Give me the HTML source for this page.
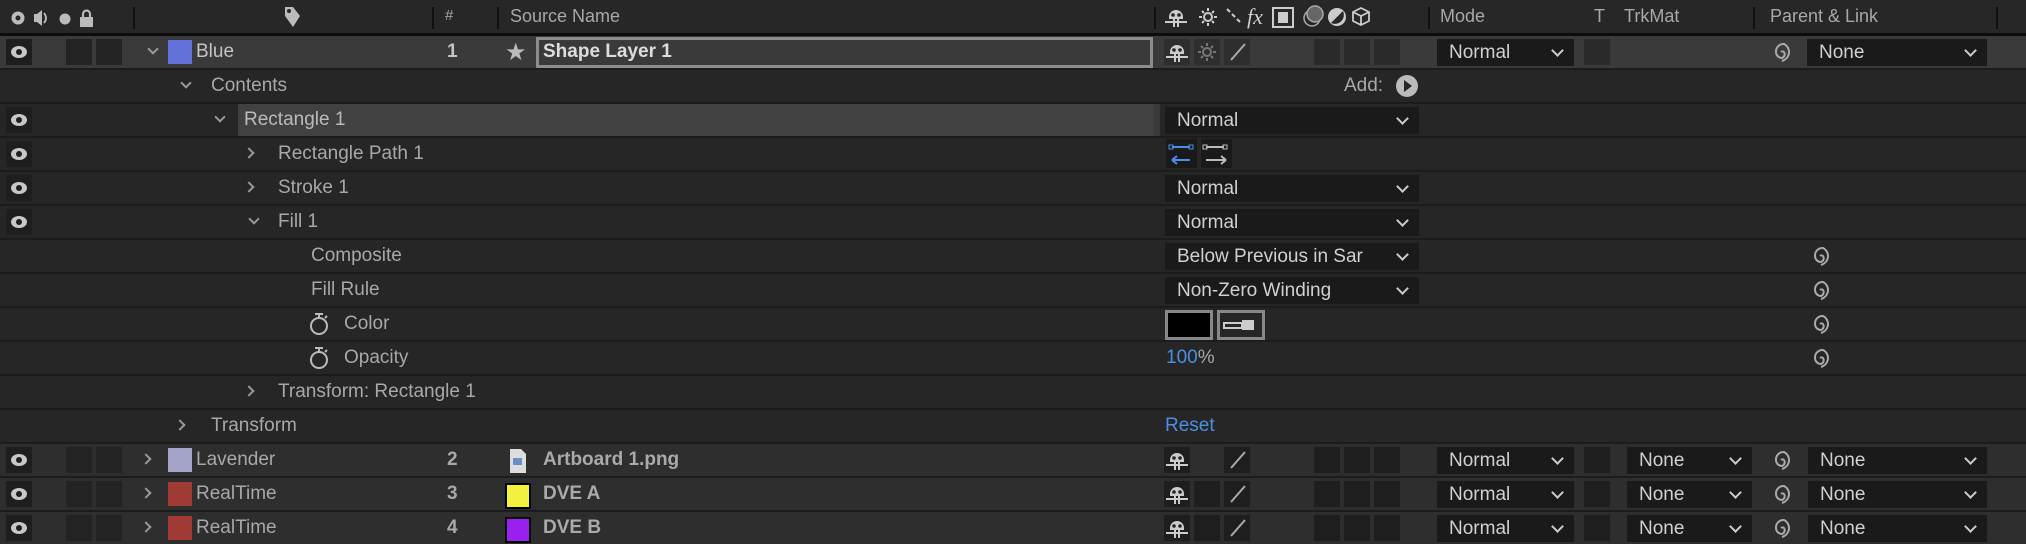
<!DOCTYPE html>
<html><head><meta charset="utf-8"><style>
*{margin:0;padding:0;box-sizing:border-box}
body{width:2026px;height:544px;background:#1c1c1c;overflow:hidden;font-family:"Liberation Sans",sans-serif;font-size:19px;color:#a8a8a8;position:relative}
.a{position:absolute}
.hdr{left:0;top:0;width:2026px;height:33px;background:#272727}
.row{position:absolute;left:0;width:2026px;height:32px;background:#262626}
.lay{background:#2e2e2e}
.sel{background:#3a3a3a}
.t{position:absolute;top:5px;white-space:nowrap}
.eye{position:absolute;left:6px;top:3px;width:26px;height:26px;background:#1e1e1e}
.eye::after{content:"";position:absolute;left:5px;top:7px;width:16px;height:12px;border-radius:50%;background:#c8c8c8}
.eye::before{content:"";position:absolute;left:10px;top:10px;width:6px;height:6px;border-radius:50%;background:#1e1e1e;z-index:2}
.bx{position:absolute;top:3px;width:26px;height:26px;background:#232323}
.dd{position:absolute;top:3px;height:27px;background:#1a1a1a;color:#d0d0d0}
.dd span{position:absolute;left:12px;top:3px}
.dd i{position:absolute;right:12px;top:7px;width:9px;height:9px;border-right:2px solid #ccc;border-bottom:2px solid #ccc;transform:rotate(45deg)}
.chd{position:absolute;top:9px;width:8px;height:8px;border-right:2px solid #999;border-bottom:2px solid #999;transform:rotate(45deg)}
.chr{position:absolute;top:11px;width:8px;height:8px;border-right:2px solid #999;border-bottom:2px solid #999;transform:rotate(-45deg)}
.sw{position:absolute;top:4px;width:24px;height:24px}
.sp{position:absolute;top:3px}
</style></head><body>
<svg width="0" height="0" style="position:absolute"><defs>
<symbol id="shy" viewBox="0 0 26 26"><path d="M6 13a7 7 0 0 1 14 0v2H6z" fill="#ccc"/><circle cx="10" cy="11" r="1.8" fill="#222"/><circle cx="16" cy="11" r="1.8" fill="#222"/><path d="M2 18h22" stroke="#ccc" stroke-width="2"/><path d="M11 15v8M15 15v8" stroke="#ccc" stroke-width="2"/></symbol>
<symbol id="spi" viewBox="0 0 26 26"><path d="M13 13a2 2 0 0 1 3 0 4 4 0 0 1-2 6 6 6 0 0 1-6-6 7.5 7.5 0 0 1 8-8 9 9 0 0 1 5 9 10 10 0 0 1-7 8" stroke="#aaa" stroke-width="2" fill="none"/></symbol>
</defs></svg>
<div class="a hdr">
 <svg class="a" style="left:10px;top:7px" width="90" height="22" viewBox="0 0 90 22"><circle cx="8" cy="11" r="6.5" fill="#bbb"/><circle cx="8" cy="11" r="2.5" fill="#272727"/><path d="M24 7h3l5-4v16l-5-4h-3z" fill="#bbb"/><path d="M34 6q4 5 0 10" stroke="#bbb" fill="none" stroke-width="1.8"/><circle cx="55" cy="12" r="5.5" fill="#bbb"/><rect x="70" y="10" width="13" height="10" fill="#bbb"/><path d="M73 10v-3a3.5 3.5 0 0 1 7 0v3" stroke="#bbb" stroke-width="2.2" fill="none"/></svg>
 <div class="a" style="left:133px;top:7px;width:2px;height:22px;background:#111"></div>
 <svg class="a" style="left:282px;top:5px" width="20" height="24"><path d="M3 2h8l7 9-7 11-8-11z" fill="#bbb"/><circle cx="7" cy="6" r="2" fill="#272727"/></svg>
 <div class="a" style="left:432px;top:7px;width:2px;height:22px;background:#111"></div>
 <div class="t" style="left:445px;top:7px;font-size:15px">#</div>
 <div class="a" style="left:497px;top:7px;width:2px;height:22px;background:#111"></div>
 <div class="t" style="left:510px;top:6px;font-size:18px">Source Name</div>
 <div class="a" style="left:1154px;top:7px;width:2px;height:22px;background:#111"></div>
 <svg class="a" style="left:1163px;top:4px" width="230" height="26" viewBox="0 0 230 26">
  <use href="#shy" x="0" y="0" width="26" height="26"/>
  <g stroke="#ccc" stroke-width="2"><circle cx="45" cy="13" r="4" fill="none"/><path d="M45 4v3M45 19v3M36 13h3M51 13h3M39 7l2 2M49 17l2 2M39 19l2-2M49 9l2-2"/><path d="M64 5l3 3M69 10l3 3M74 15l3 3" /></g>
  <text x="84" y="20" font-family="Liberation Serif" font-style="italic" font-size="22" fill="#ccc">fx</text>
  <rect x="110" y="4" width="20" height="19" fill="none" stroke="#ccc" stroke-width="2"/><rect x="115" y="8" width="10" height="11" fill="#ccc"/>
  <circle cx="149" cy="14" r="8" fill="none" stroke="#aaa" stroke-width="1.5"/><circle cx="152" cy="10" r="8" fill="#666" stroke="#aaa" stroke-width="1.5"/>
  <circle cx="174" cy="13" r="9" fill="#ccc"/><path d="M180 7a9 9 0 0 1-12 12z" fill="#272727"/>
  <path d="M198 4l8 4v9l-8 4-8-4V8zM190 8l8 4 8-4M198 12v9" fill="none" stroke="#ccc" stroke-width="1.8"/>
 </svg>
 <div class="a" style="left:1428px;top:7px;width:2px;height:22px;background:#111"></div>
 <div class="t" style="left:1440px;top:6px;font-size:18px">Mode</div>
 <div class="t" style="left:1594px;top:6px;font-size:18px">T</div>
 <div class="t" style="left:1624px;top:6px;font-size:18px">TrkMat</div>
 <div class="a" style="left:1753px;top:7px;width:2px;height:22px;background:#111"></div>
 <div class="t" style="left:1770px;top:6px;font-size:18px">Parent &amp; Link</div>
 <div class="a" style="left:1996px;top:7px;width:2px;height:22px;background:#111"></div>
</div>
<div class="a" style="left:0;top:33px;width:2026px;height:3px;background:#0c0c0c"></div>

<!-- row 1 -->
<div class="row sel" style="top:36px">
 <div class="eye"></div><div class="bx" style="left:66px"></div><div class="bx" style="left:96px"></div>
 <div class="chd" style="left:149px"></div>
 <div class="sw" style="left:168px;background:#6272d8"></div>
 <div class="t" style="left:196px;color:#c4c4c4">Blue</div>
 <div class="t" style="left:447px;color:#c4c4c4;font-weight:bold">1</div>
 <div class="t" style="left:505px;top:2px;font-size:24px;color:#bbb">&#9733;</div>
 <div class="a" style="left:536px;top:1px;width:617px;height:31px;border:3px solid #8c8c8c;background:#3a3a3a"></div>
 <div class="t" style="left:543px;color:#ddd;font-weight:bold">Shape Layer 1</div>
 <div class="bx" style="left:1164px;background:#2e2e2e"></div><div class="bx" style="left:1194px;background:#2e2e2e"></div><div class="bx" style="left:1224px;background:#2e2e2e"></div>
 <svg class="a" style="left:1164px;top:3px" width="26" height="26"><use href="#shy"/></svg>
 <svg class="a" style="left:1194px;top:3px" width="26" height="26"><g stroke="#777" stroke-width="2"><circle cx="13" cy="13" r="4" fill="none"/><path d="M13 4v3M13 19v3M4 13h3M19 13h3M7 7l2 2M17 17l2 2M7 19l2-2M17 9l2-2"/></g></svg>
 <svg class="a" style="left:1228px;top:6px" width="20" height="20"><path d="M3 18L17 2" stroke="#aaa" stroke-width="2"/></svg>
 <div class="bx" style="left:1314px;background:#2a2a2a"></div><div class="bx" style="left:1344px;background:#2a2a2a"></div><div class="bx" style="left:1374px;background:#2a2a2a"></div>
 <div class="dd" style="left:1437px;width:137px"><span>Normal</span><i></i></div>
 <div class="bx" style="left:1584px;background:#2a2a2a"></div>
 <svg class="sp" style="left:1768px" width="26" height="26"><use href="#spi"/></svg>
 <div class="dd" style="left:1807px;width:180px"><span>None</span><i></i></div>
</div>
<!-- contents -->
<div class="row" style="top:70px">
 <div class="chd" style="left:182px"></div><div class="t" style="left:211px">Contents</div>
 <div class="t" style="left:1344px">Add:</div>
 <div class="a" style="left:1396px;top:5px;width:22px;height:22px;border-radius:50%;background:#bbb"></div>
 <div class="a" style="left:1404px;top:10px;width:0;height:0;border-left:8px solid #262626;border-top:6px solid transparent;border-bottom:6px solid transparent"></div>
</div>
<!-- rectangle 1 -->
<div class="row" style="top:104px">
 <div class="eye"></div><div class="chd" style="left:216px"></div>
 <div class="a" style="left:238px;top:0;width:916px;height:32px;background:#414141"></div>
 <div class="t" style="left:244px;color:#bbb">Rectangle 1</div>
 <div class="a" style="left:1154px;top:0;width:6px;height:32px;background:#3a3a3a"></div>
 <div class="dd" style="left:1165px;width:254px"><span>Normal</span><i></i></div>
</div>
<!-- rect path -->
<div class="row" style="top:138px">
 <div class="eye"></div><div class="chr" style="left:245px"></div><div class="t" style="left:278px">Rectangle Path 1</div>
 <div class="a" style="left:1166px;top:1px;width:31px;height:29px;background:#1a1a1a"></div>
 <div class="a" style="left:1201px;top:1px;width:31px;height:29px;background:#1a1a1a"></div>
 <svg class="a" style="left:1166px;top:1px" width="66" height="29"><path d="M6 8h18M6 21h18M6 21l5-4M6 21l5 4" stroke="#4a8fe8" stroke-width="2" fill="none"/><rect x="3" y="6" width="4" height="4" stroke="#4a8fe8" fill="none"/><rect x="23" y="6" width="4" height="4" stroke="#4a8fe8" fill="none"/><path d="M40 8h18M40 21h20M60 21l-5-4M60 21l-5 4" stroke="#bbb" stroke-width="2" fill="none"/><rect x="37" y="6" width="4" height="4" stroke="#bbb" fill="none"/><rect x="57" y="6" width="4" height="4" stroke="#bbb" fill="none"/></svg>
</div>
<!-- stroke -->
<div class="row" style="top:172px">
 <div class="eye"></div><div class="chr" style="left:245px"></div><div class="t" style="left:278px">Stroke 1</div>
 <div class="dd" style="left:1165px;width:254px"><span>Normal</span><i></i></div>
</div>
<!-- fill -->
<div class="row" style="top:206px">
 <div class="eye"></div><div class="chd" style="left:250px"></div><div class="t" style="left:278px">Fill 1</div>
 <div class="dd" style="left:1165px;width:254px"><span>Normal</span><i></i></div>
</div>
<!-- composite -->
<div class="row" style="top:240px">
 <div class="t" style="left:311px">Composite</div>
 <div class="dd" style="left:1165px;width:254px;overflow:hidden"><span>Below Previous in Sar</span><i style="background:#1a1a1a"></i></div>
 <svg class="sp" style="left:1807px" width="26" height="26"><use href="#spi"/></svg>
</div>
<!-- fill rule -->
<div class="row" style="top:274px">
 <div class="t" style="left:311px">Fill Rule</div>
 <div class="dd" style="left:1165px;width:254px"><span>Non-Zero Winding</span><i></i></div>
 <svg class="sp" style="left:1807px" width="26" height="26"><use href="#spi"/></svg>
</div>
<!-- color -->
<div class="row" style="top:308px">
 <svg class="a" style="left:306px;top:3px" width="26" height="26"><circle cx="13" cy="15" r="8" stroke="#bbb" stroke-width="2" fill="none"/><path d="M9 3h8M13 3v4M19 7l2-2" stroke="#bbb" stroke-width="2"/></svg>
 <div class="t" style="left:344px">Color</div>
 <div class="a" style="left:1165px;top:2px;width:48px;height:30px;border:3px solid #888;background:#000"></div>
 <div class="a" style="left:1217px;top:2px;width:48px;height:30px;border:3px solid #888;background:#262626"></div>
 <svg class="a" style="left:1222px;top:9px" width="40" height="16"><path d="M2 6h18v5H2z" stroke="#ccc" stroke-width="2" fill="none"/><rect x="20" y="3" width="12" height="10" fill="#ccc"/></svg>
 <svg class="sp" style="left:1807px" width="26" height="26"><use href="#spi"/></svg>
</div>
<!-- opacity -->
<div class="row" style="top:342px">
 <svg class="a" style="left:306px;top:3px" width="26" height="26"><circle cx="13" cy="15" r="8" stroke="#bbb" stroke-width="2" fill="none"/><path d="M9 3h8M13 3v4M19 7l2-2" stroke="#bbb" stroke-width="2"/></svg>
 <div class="t" style="left:344px">Opacity</div>
 <div class="t" style="left:1166px"><span style="color:#4a90e2">100</span>%</div>
 <svg class="sp" style="left:1807px" width="26" height="26"><use href="#spi"/></svg>
</div>
<!-- transform rect -->
<div class="row" style="top:376px">
 <div class="chr" style="left:245px"></div><div class="t" style="left:278px">Transform: Rectangle 1</div>
</div>
<!-- transform -->
<div class="row" style="top:410px">
 <div class="chr" style="left:176px"></div><div class="t" style="left:211px">Transform</div>
 <div class="t" style="left:1165px;color:#4a90e2">Reset</div>
</div>
<!-- layer rows -->
<div class="row lay" style="top:444px">
 <div class="eye"></div><div class="bx" style="left:66px"></div><div class="bx" style="left:96px"></div>
 <div class="chr" style="left:142px"></div><div class="sw" style="left:168px;background:#a3a4c8"></div>
 <div class="t" style="left:196px">Lavender</div><div class="t" style="left:447px;font-weight:bold">2</div>
 <svg class="a" style="left:508px;top:4px" width="20" height="26"><path d="M2 1h11l5 5v19H2z" fill="#ddd"/><rect x="5" y="10" width="9" height="7" fill="#6a8fc8"/></svg>
 <div class="t" style="left:543px;font-weight:bold;color:#aaa">Artboard 1.png</div>
 <div class="bx" style="left:1164px;background:#1e1e1e"></div><svg class="a" style="left:1164px;top:3px" width="26" height="26"><use href="#shy"/></svg>
 <div class="bx" style="left:1224px;background:#1e1e1e"></div><svg class="a" style="left:1228px;top:6px" width="20" height="20"><path d="M3 18L17 2" stroke="#aaa" stroke-width="2"/></svg>
 <div class="bx" style="left:1314px;background:#1e1e1e"></div><div class="bx" style="left:1344px;background:#1e1e1e"></div><div class="bx" style="left:1374px;background:#1e1e1e"></div>
 <div class="dd" style="left:1437px;width:137px"><span>Normal</span><i></i></div>
 <div class="bx" style="left:1584px;background:#1e1e1e"></div>
 <div class="dd" style="left:1627px;width:125px"><span>None</span><i></i></div>
 <svg class="sp" style="left:1768px" width="26" height="26"><use href="#spi"/></svg>
 <div class="dd" style="left:1808px;width:179px"><span>None</span><i></i></div>
</div>
<div class="row lay" style="top:478px">
 <div class="eye"></div><div class="bx" style="left:66px"></div><div class="bx" style="left:96px"></div>
 <div class="chr" style="left:142px"></div><div class="sw" style="left:168px;background:#a03a34"></div>
 <div class="t" style="left:196px">RealTime</div><div class="t" style="left:447px;font-weight:bold">3</div>
 <div class="a" style="left:505px;top:5px;width:26px;height:26px;border:2px solid #000;background:#f2f23c"></div>
 <div class="t" style="left:543px;font-weight:bold;color:#aaa">DVE A</div>
 <div class="bx" style="left:1164px;background:#1e1e1e"></div><svg class="a" style="left:1164px;top:3px" width="26" height="26"><use href="#shy"/></svg>
 <div class="bx" style="left:1194px;background:#1e1e1e"></div>
 <div class="bx" style="left:1224px;background:#1e1e1e"></div><svg class="a" style="left:1228px;top:6px" width="20" height="20"><path d="M3 18L17 2" stroke="#aaa" stroke-width="2"/></svg>
 <div class="bx" style="left:1314px;background:#1e1e1e"></div><div class="bx" style="left:1344px;background:#1e1e1e"></div><div class="bx" style="left:1374px;background:#1e1e1e"></div>
 <div class="dd" style="left:1437px;width:137px"><span>Normal</span><i></i></div>
 <div class="bx" style="left:1584px;background:#1e1e1e"></div>
 <div class="dd" style="left:1627px;width:125px"><span>None</span><i></i></div>
 <svg class="sp" style="left:1768px" width="26" height="26"><use href="#spi"/></svg>
 <div class="dd" style="left:1808px;width:179px"><span>None</span><i></i></div>
</div>
<div class="row lay" style="top:512px">
 <div class="eye"></div><div class="bx" style="left:66px"></div><div class="bx" style="left:96px"></div>
 <div class="chr" style="left:142px"></div><div class="sw" style="left:168px;background:#a03a34"></div>
 <div class="t" style="left:196px">RealTime</div><div class="t" style="left:447px;font-weight:bold">4</div>
 <div class="a" style="left:505px;top:5px;width:26px;height:26px;border:2px solid #000;background:#9a20f0"></div>
 <div class="t" style="left:543px;font-weight:bold;color:#aaa">DVE B</div>
 <div class="bx" style="left:1164px;background:#1e1e1e"></div><svg class="a" style="left:1164px;top:3px" width="26" height="26"><use href="#shy"/></svg>
 <div class="bx" style="left:1194px;background:#1e1e1e"></div>
 <div class="bx" style="left:1224px;background:#1e1e1e"></div><svg class="a" style="left:1228px;top:6px" width="20" height="20"><path d="M3 18L17 2" stroke="#aaa" stroke-width="2"/></svg>
 <div class="bx" style="left:1314px;background:#1e1e1e"></div><div class="bx" style="left:1344px;background:#1e1e1e"></div><div class="bx" style="left:1374px;background:#1e1e1e"></div>
 <div class="dd" style="left:1437px;width:137px"><span>Normal</span><i></i></div>
 <div class="bx" style="left:1584px;background:#1e1e1e"></div>
 <div class="dd" style="left:1627px;width:125px"><span>None</span><i></i></div>
 <svg class="sp" style="left:1768px" width="26" height="26"><use href="#spi"/></svg>
 <div class="dd" style="left:1808px;width:179px"><span>None</span><i></i></div>
</div>
</body></html>
